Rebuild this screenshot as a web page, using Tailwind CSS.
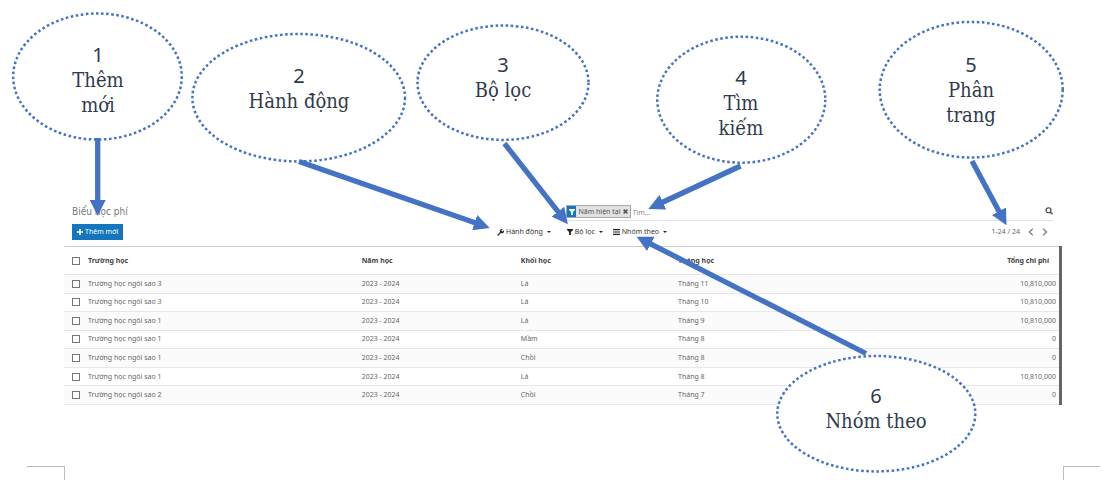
<!DOCTYPE html>
<html lang="vi">
<head>
<meta charset="utf-8">
<title>Biểu học phí</title>
<script src="https://cdn.jsdelivr.net/npm/@tailwindcss/browser@4"></script>
</head>
<body class="bg-white">
<div class="relative flex min-h-screen flex-col overflow-hidden font-['Noto_Sans',sans-serif] text-[7px] leading-[10px] text-[#666]">

  <main class="ml-16 mr-[41px] pt-[205px]">
    <div class="grid grid-cols-[50.8%_1fr] pr-[9px]">
      <h1 class="pl-2 font-['DejaVu_Sans_Condensed','DejaVu_Sans',sans-serif] text-[10px] leading-[14px] text-[#777]">Biểu học phí</h1>
      <form class="flex h-4 items-start border-b border-[#e2e2e2]" role="search">
        <span class="flex h-[13px] items-center border border-[#a9a9a9] bg-[#e2e2e2] text-[#555]">
          <span class="flex h-[11px] w-[9px] items-center justify-center bg-[#1576bd]">
            <svg class="size-[6px]" viewBox="0 0 12 12" fill="#fff"><path d="M0 0h12v2L7.800 6v6L4.200 12V6L0 2z"/></svg>
          </span>
          <span class="px-[2px]">Năm hiện tại</span>
          <button type="button" aria-label="Xóa bộ lọc" class="pr-[2px]">
            <svg class="size-[5px]" viewBox="0 0 12 12" stroke="#555" stroke-width="3.6"><path d="M1.5 1.5l9 9M10.500 1.500l-9 9"/></svg>
          </button>
        </span>
        <input type="text" aria-label="Tìm kiếm" placeholder="Tìm..." class="h-[14px] min-w-0 flex-1 pl-[2px] outline-none placeholder:text-[#888]">
        <button type="button" aria-label="Tìm" class="pt-[2px]">
          <svg class="size-[8px]" viewBox="0 0 16 16" fill="none" stroke="#444" stroke-width="2.4"><circle cx="7" cy="6.500" r="5"/><path d="M10.500 10l4.500 4.500"/></svg>
        </button>
      </form>
    </div>

    <div class="grid grid-cols-[433px_1fr_auto] items-center pt-[3px] pb-[6px] pr-[14px]">
      <div class="pl-2">
        <button type="button" class="flex h-4 items-center gap-[2px] bg-[#1576bd] px-[5px] text-white">
          <svg class="size-[6px]" viewBox="0 0 12 12" fill="#fff"><path d="M4.500 0h3v4.500H12v3H7.500V12h-3V7.500H0v-3h4.500z"/></svg>
          Thêm mới
        </button>
      </div>
      <div class="flex items-center text-[#333]">
        <button type="button" class="mr-4 flex items-center gap-[2px]">
          <svg class="size-[7px]" viewBox="0 0 14 14" fill="#222"><path d="M1 11.300L6.200 6.200A4 4 0 0 1 11.500.700L9 3l.3 1.700 1.700.3 2.500-2.300A4 4 0 0 1 8 8L2.800 13.200a1.300 1.300 0 0 1-1.900-1.900z"/></svg>
          Hành động
          <svg class="ml-[2px] h-[2px] w-[4px]" viewBox="0 0 8 4" fill="#222"><path d="M0 0h8L4 4z"/></svg>
        </button>
        <button type="button" class="mr-[10px] flex items-center gap-[2px]">
          <svg class="size-[6px]" viewBox="0 0 12 12" fill="#222"><path d="M0 0h12v2L7.800 6v6L4.200 12V6L0 2z"/></svg>
          Bộ lọc
          <svg class="ml-[2px] h-[2px] w-[4px]" viewBox="0 0 8 4" fill="#222"><path d="M0 0h8L4 4z"/></svg>
        </button>
        <button type="button" class="flex items-center gap-[2px]">
          <svg class="h-[6px] w-[7px]" viewBox="0 0 14 12" fill="#222"><path d="M0 0h14v2.400H0zM0 4.800h14v2.400H0zM0 9.600h14V12H0z"/></svg>
          Nhóm theo
          <svg class="ml-[2px] h-[2px] w-[4px]" viewBox="0 0 8 4" fill="#222"><path d="M0 0h8L4 4z"/></svg>
        </button>
      </div>
      <div class="flex items-center gap-2">
        <span>1-24 / 24</span>
        <button type="button" aria-label="Trang trước"><svg class="h-[8px] w-[6px]" viewBox="0 0 12 16" fill="none" stroke="#888" stroke-width="3"><path d="M9.500 1.500L3 8l6.500 6.500"/></svg></button>
        <button type="button" aria-label="Trang sau"><svg class="h-[8px] w-[6px]" viewBox="0 0 12 16" fill="none" stroke="#888" stroke-width="3"><path d="M2.500 1.500L9 8l-6.500 6.500"/></svg></button>
      </div>
    </div>

    <div class="border-r-[3px] border-[#666]">
      <table class="h-[159px] w-full table-fixed border-collapse text-left">
        <colgroup><col class="w-6"><col class="w-[27.500%]"><col class="w-[16%]"><col class="w-[15.800%]"><col><col class="w-[16%]"></colgroup>
        <thead>
          <tr class="h-7 border-t border-b border-t-[#ccc] border-b-[#e8e8e8] text-[#444]">
            <th class="p-0 pl-2"><input type="checkbox" aria-label="Chọn tất cả" class="block size-2 appearance-none border border-[#777] bg-white"></th>
            <th class="p-0">Trường học</th><th class="p-0">Năm học</th><th class="p-0">Khối học</th><th class="p-0">Tháng học</th><th class="p-0 pr-[10px] text-right">Tổng chi phí</th>
          </tr>
        </thead>
        <tbody id="rows"></tbody>
      </table>
    </div>
  </main>

  <footer class="mt-auto flex justify-between pl-[27px] pr-[3px]" aria-hidden="true">
    <div class="h-[14px] w-[38px] border-t border-r border-[#bbb]"></div>
    <div class="h-[14px] w-[37px] border-t border-l border-[#bbb]"></div>
  </footer>

  <!-- Numbered callouts drawn over the list view -->
  <svg class="pointer-events-none absolute left-0 top-0" width="1103" height="480" viewBox="0 0 1103 480" fill="none" stroke="#4472c4">
    <defs>
      <marker id="head" markerUnits="userSpaceOnUse" markerWidth="16" markerHeight="16" refX="2" refY="8" orient="auto"><path d="M0 0L16 8L0 16z" fill="#4472c4" stroke="none"/></marker>
    </defs>
    <g stroke-width="2.500" stroke-dasharray="2.550 2.550">
      <ellipse cx="97.500" cy="76.500" rx="84.300" ry="63"/>
      <ellipse cx="298.700" cy="97.700" rx="106.300" ry="63.700"/>
      <ellipse cx="503" cy="82.700" rx="85.500" ry="57.200"/>
      <ellipse cx="741.300" cy="99.700" rx="84" ry="63"/>
      <ellipse cx="971.200" cy="89.700" rx="91.500" ry="67.800"/>
      <ellipse cx="876.300" cy="413.700" rx="99" ry="57.700" fill="#fff"/>
    </g>
    <g stroke-width="5.300">
      <path d="M97.700 138V202" marker-end="url(#head)"/>
      <path d="M299 161.500L476.500 223.300" marker-end="url(#head)"/>
      <path d="M504.500 143.500L559.200 213.200" marker-end="url(#head)"/>
      <path d="M740.500 166L661 203" marker-end="url(#head)"/>
      <path d="M972 161L999.900 213" marker-end="url(#head)"/>
      <path d="M866 353.500L649 243.100" marker-end="url(#head)"/>
    </g>
  </svg>
  <div class="font-['DejaVu_Serif_Condensed','DejaVu_Serif',serif] text-center text-[20px] leading-[25px] text-[#2f3a4c]">
    <p class="absolute left-[58px] top-[42px] w-20"><span class="font-['Noto_Sans',sans-serif]">1</span><br>Thêm<br>mới</p>
    <p class="absolute left-[239px] top-[63px] w-[120px]"><span class="font-['Noto_Sans',sans-serif]">2</span><br>Hành động</p>
    <p class="absolute left-[463px] top-[52px] w-20"><span class="font-['Noto_Sans',sans-serif]">3</span><br>Bộ lọc</p>
    <p class="absolute left-[701px] top-[65px] w-20"><span class="font-['Noto_Sans',sans-serif]">4</span><br>Tìm<br>kiếm</p>
    <p class="absolute left-[931px] top-[52px] w-20"><span class="font-['Noto_Sans',sans-serif]">5</span><br>Phân<br>trang</p>
    <p class="absolute left-[816px] top-[383px] w-[120px]"><span class="font-['Noto_Sans',sans-serif]">6</span><br>Nhóm theo</p>
  </div>
</div>
<script>
  const rows = [
    ['Trường học ngôi sao 3', 'Lá', 'Tháng 11', '10,810,000'],
    ['Trường học ngôi sao 3', 'Lá', 'Tháng 10', '10,810,000'],
    ['Trường học ngôi sao 1', 'Lá', 'Tháng 9', '10,810,000'],
    ['Trường học ngôi sao 1', 'Mầm', 'Tháng 8', '0'],
    ['Trường học ngôi sao 1', 'Chồi', 'Tháng 8', '0'],
    ['Trường học ngôi sao 1', 'Lá', 'Tháng 8', '10,810,000'],
    ['Trường học ngôi sao 2', 'Chồi', 'Tháng 7', '0']
  ];
  document.getElementById('rows').innerHTML = rows.map(([school, grade, month, total]) => `
    <tr class="border-b border-[#e8e8e8] odd:bg-[#fbfbfb]">
      <td class="p-0 pl-2"><input type="checkbox" aria-label="Chọn ${school}, ${month}" class="block size-2 appearance-none border border-[#777] bg-white"></td>
      <td class="p-0">${school}</td><td class="p-0">2023 - 2024</td><td class="p-0">${grade}</td><td class="p-0">${month}</td><td class="p-0 pr-[3px] text-right">${total}</td>
    </tr>`).join('');
</script>
</body>
</html>
